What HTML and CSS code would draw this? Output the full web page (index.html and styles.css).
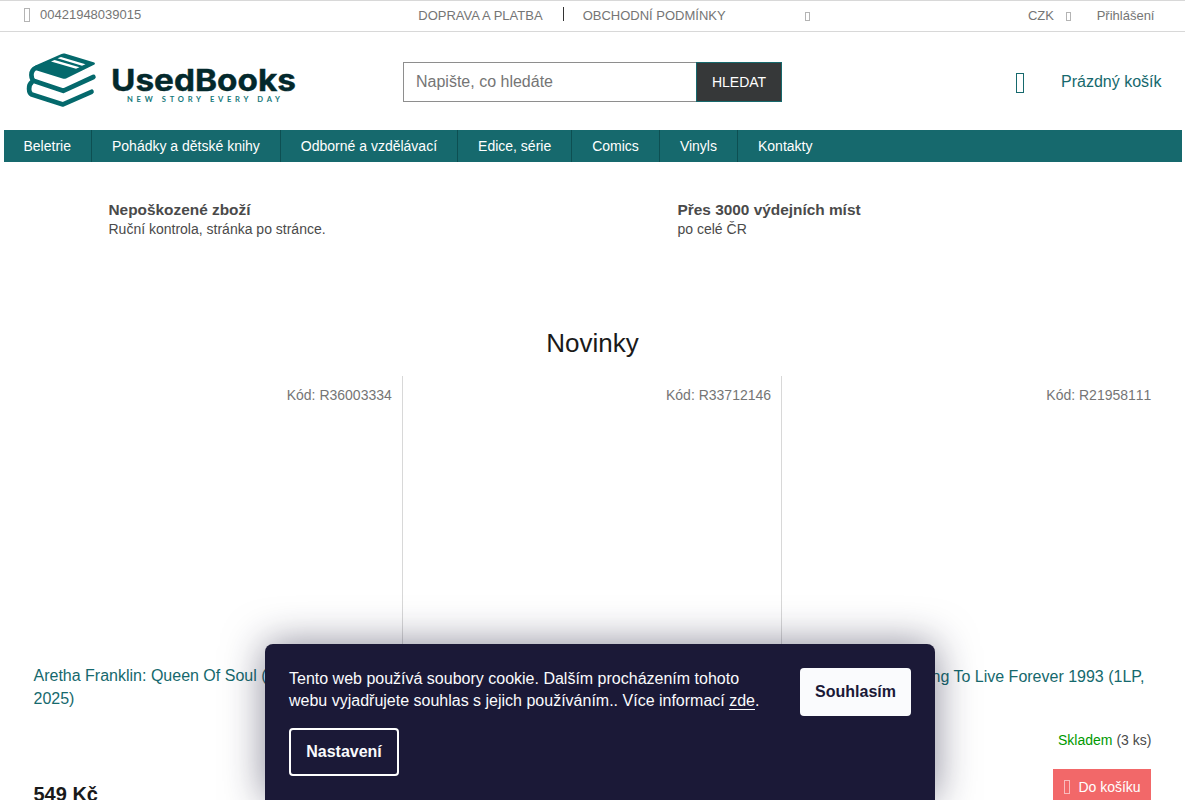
FILE: index.html
```html
<!DOCTYPE html>
<html lang="cs">
<head>
<meta charset="utf-8">
<title>UsedBooks</title>
<link rel="stylesheet" href="styles.css">
</head>
<body>
<div class="page">
  <div class="topbar">
    <div class="phone"><i class="box box-m"></i><span>00421948039015</span></div>
    <div class="toplinks"><a>DOPRAVA A PLATBA</a><i class="divider"></i><a>OBCHODNÍ PODMÍNKY</a><i class="box box-s"></i></div>
    <div class="tools"><span>CZK</span><i class="box box-s"></i><a>Přihlášení</a></div>
  </div>
  <header class="header">
    <svg class="logo" width="280" height="64" viewBox="20 48 280 64" role="img" aria-label="UsedBooks">
      <path fill="#04696c" d="M61.5 53.9 Q63 53.2 64.7 53.6 L94.3 62.4 Q95.6 63.3 94.5 64.6 L66 78.4 Q64.5 79 62.5 78.5 L36 70.3 L31.5 69.5 Q32.5 67 36 65.3 Z"/>
      <path class="logo-line" d="M36.5 67.6 Q31.4 69.5 31.4 75 Q31.6 79.6 34.2 81 L63.2 90.8 L93.4 77"/>
      <path class="logo-line" d="M32 82 Q28.9 84.3 29.1 89 Q29.2 93.4 31.8 94.6 L63 104.4 L91.5 91.8"/>
      <path fill="#fff" d="M57.5 58.2 L61 56.9 L85.5 64.2 L82 65.8 Z M51 61.5 L54.6 60 L79.5 67.2 L76 68.8 Z"/>
      <text class="logo-name" x="111" y="90.6" textLength="185" lengthAdjust="spacingAndGlyphs">UsedBooks</text>
      <text class="logo-tag" x="127" y="102" textLength="153">NEW STORY EVERY DAY</text>
    </svg>
    <form class="search"><span class="field">Napište, co hledáte</span><span class="submit">HLEDAT</span></form>
    <div class="cart"><i class="box box-l"></i><span>Prázdný košík</span></div>
  </header>
  <nav class="nav"><a>Beletrie</a><a>Pohádky a dětské knihy</a><a>Odborné a vzdělávací</a><a>Edice, série</a><a>Comics</a><a>Vinyls</a><a>Kontakty</a></nav>
  <section class="benefits">
    <div><h3>Nepoškozené zboží</h3><p>Ruční kontrola, stránka po stránce.</p></div>
    <div><h3>Přes 3000 výdejních míst</h3><p>po celé ČR</p></div>
  </section>
  <h2 class="heading">Novinky</h2>
  <section class="products">
    <article class="product">
      <div class="code">Kód: R36003334</div>
      <a class="title title-long">Aretha Franklin: Queen Of Soul (1LP,<br>2025)</a>
      <div class="stock"></div>
      <div class="buy"><strong>549 Kč</strong></div>
    </article>
    <article class="product"><div class="code">Kód: R33712146</div></article>
    <article class="product">
      <div class="code">Kód: R21958111</div>
      <a class="title title-end">Going To Live Forever 1993 (1LP,</a>
      <div class="stock"><b>Skladem</b> (3 ks)</div>
      <div class="buy buy-end"><span class="add"><i class="box box-w"></i>Do košíku</span></div>
    </article>
  </section>
</div>
<aside class="cookies">
  <div class="cookie-row">
    <p>Tento web používá soubory cookie. Dalším procházením tohoto<br>webu vyjadřujete souhlas s jejich používáním.. Více informací <a>zde</a>.</p>
    <span class="agree">Souhlasím</span>
  </div>
  <span class="settings">Nastavení</span>
</aside>
</body>
</html>
```
FILE: styles.css
```css
* { box-sizing: border-box; }
html, body { height: 100%; }
body { margin: 0; overflow: hidden; background: #fff; color: #4a4a4a; font: 14px/20px "Liberation Sans", Arial, sans-serif; }
h2, h3, p { margin: 0; }
.page { width: 1185px; height: 800px; overflow: hidden; }

.box { display: block; flex: none; border: 1px solid #b4b4b4; }
.box-m { width: 6px; height: 14px; }
.box-s { width: 5px; height: 9px; }
.box-l { width: 8px; height: 20px; border-color: #16696d; }
.box-w { width: 6px; height: 14px; border-color: #f9bcbc; }

.topbar { display: grid; grid-template-columns: 418.3px 609.7px 157px; height: 32px; border: solid #d8d8d8; border-width: 1px 0; color: #757575; font-size: 13px; }
.phone { display: flex; gap: 10px; padding: 4px 0 0 24px; }
.phone .box { margin-top: 3px; }
.toplinks, .tools { display: flex; padding-top: 5px; }
.divider { width: 1px; height: 14px; margin: 1px 18.4px 0 20.7px; background: #333; }
.toplinks .box { margin: 6px 0 0 79px; }
.tools .box { margin: 6px 25.7px 0 12px; }

.header { display: grid; grid-template-columns: 383px 379px 1fr; height: 98px; padding-left: 20px; }
.logo { margin-top: 16px; }
.logo-line { fill: none; stroke: #04696c; stroke-width: 4.7; stroke-linecap: round; stroke-linejoin: round; }
.logo-name { font: 700 30px Inter, sans-serif; fill: #03292c; stroke: #03292c; stroke-width: .4; }
.logo-tag { font: 700 7.6px Lato, sans-serif; fill: #16797b; }
.search { display: flex; height: 40px; margin-top: 30px; }
.field { flex: 1; padding-left: 12px; border: 1px solid #8e8e8e; border-right: 0; color: #757575; font-size: 16px; line-height: 38px; }
.submit { width: 86px; border: 1px solid #16696d; background: #363839; color: #fff; line-height: 38px; text-align: center; }
.cart { display: flex; justify-content: flex-end; gap: 37px; padding: 40px 23.5px 0 0; color: #16696d; font-size: 16px; }
.cart .box { margin-top: 1px; }

.nav { display: flex; width: 1178px; height: 32px; margin-left: 4px; background: #16696d; color: #fff; line-height: 32px; }
.nav a { padding: 0 20px; border-right: 1px solid #0d4f52; }
.nav a:first-child { padding-left: 19.5px; }
.nav a:last-child { border: 0; }

.benefits { display: grid; grid-template-columns: 569px 1fr; height: 160px; padding: 38px 0 0 108.5px; }
.benefits h3 { font-size: 15.4px; line-height: 20px; }
.benefits p { line-height: 18px; }
.heading { height: 54px; padding-top: 3px; color: #1a1a1a; font-size: 26px; font-weight: 400; line-height: 36px; text-align: center; }

.products { display: grid; grid-template-columns: repeat(3, 379.3px); height: 440px; padding-left: 23.5px; }
.product { padding: 0 10px; border-right: 1px solid #d8d8d8; }
.product:last-child { border: 0; }
.code { height: 289px; padding-top: 9px; color: #757575; text-align: right; font-kerning: none; }
.title { display: block; height: 65px; color: #16696d; font-size: 16px; line-height: 23px; }
.title-long { height: 66px; margin-top: -1px; }
.title-end { padding: 0 7px 0 0; text-align: right; }
.stock { height: 39px; text-align: right; }
.stock b { color: #090; font-weight: 400; }
.buy { display: flex; color: #1a1a1a; font-size: 20px; line-height: 50px; }
.buy-end { justify-content: flex-end; }
.add { display: flex; align-items: center; gap: 8px; width: 98px; height: 36px; padding-left: 11px; background: #f26869; color: #fff; font-size: 14px; }

.cookies { position: absolute; left: 265px; top: 644px; width: 670px; height: 156px; padding: 24px; border-radius: 8px 8px 0 0; background: #1b1937; box-shadow: 0 0 40px rgba(27, 25, 55, .52); color: #fafbfd; font-size: 16px; line-height: 22px; }
.cookie-row { display: flex; justify-content: space-between; height: 60px; }
.cookies p a { border-bottom: 1px solid; }
.agree, .settings { display: block; height: 48px; border-radius: 4px; font-weight: 700; line-height: 48px; text-align: center; }
.agree { width: 111px; background: #fafbfd; color: #1b1937; }
.settings { width: 110px; border: 2px solid #fff; line-height: 44px; }
```
